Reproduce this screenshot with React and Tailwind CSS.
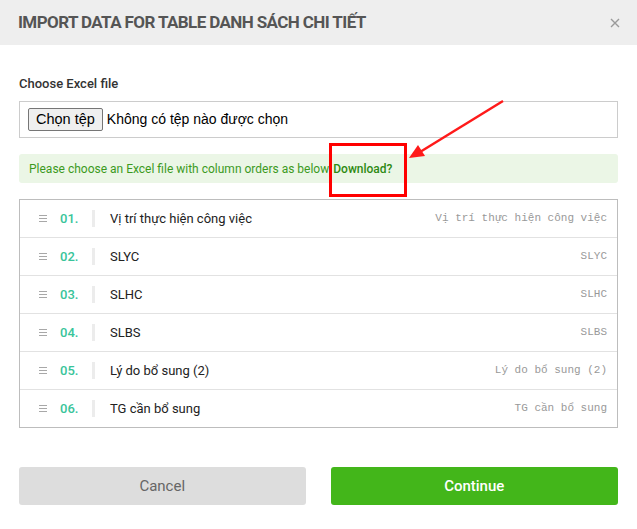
import React from "react";

const rows = [
  ["01.", "Vị trí thực hiện công việc"],
  ["02.", "SLYC"],
  ["03.", "SLHC"],
  ["04.", "SLBS"],
  ["05.", "Lý do bổ sung (2)"],
  ["06.", "TG cần bổ sung"],
];

export default function App() {
  return (
    <div className="relative w-[637px] h-[529px] bg-white overflow-hidden" style={{ fontFamily: "Roboto, 'Liberation Sans', sans-serif" }}>
      <div className="h-[45px] bg-[#eeeeee] flex items-center justify-between pl-[18px] pr-[16px]">
        <div className="text-[17px] font-bold text-[#555555] tracking-[-0.6px]">IMPORT DATA FOR TABLE DANH SÁCH CHI TIẾT</div>
        <svg width="10" height="10" viewBox="0 0 10 10" className="mr-[1px]">
          <path d="M1 1L9 9M9 1L1 9" stroke="#9a9a9a" strokeWidth="1.4" />
        </svg>
      </div>
      <div className="px-[19px] pt-[31px]">
        <div className="text-[13px] font-medium text-[#333] leading-[16px]">Choose Excel file</div>
        <div className="mt-[9px] h-[37px] border border-[#cccccc] flex items-center px-[8px] gap-[4px]" style={{ fontFamily: "'Liberation Sans', Arial, sans-serif" }}>
          <span className="h-[23px] px-[7px] bg-[#efefef] border border-[#767676] rounded-[2px] flex items-center text-[14.5px] text-black">Chọn tệp</span>
          <span className="text-[14px] text-black">Không có tệp nào được chọn</span>
        </div>
        <div className="mt-[16px] h-[29px] bg-[#ebf6e6] rounded-[3px] flex items-center px-[10px] text-[12px] text-[#3c9a1e]">
          <span>Please choose an Excel file with column orders as below</span>
          <span className="ml-[4px] font-medium text-[#2e8a12]">Download?</span>
        </div>
        <div className="mt-[16px] border border-[#bdbdbd]">
          {rows.map(([n, t], i) => (
            <div key={n} className={"flex items-center " + (i > 0 ? "h-[38px] border-t border-[#e2e2e2]" : "h-[37px]")}>
              <span className="ml-[19px] w-[8px] flex flex-col gap-[2px]">
                <span className="h-[1px] bg-[#a8a8a8]" />
                <span className="h-[1px] bg-[#a8a8a8]" />
                <span className="h-[1px] bg-[#a8a8a8]" />
              </span>
              <span className="ml-[13px] w-[30px] text-[13px] text-[#39c49a] font-medium">{n}</span>
              <span className="ml-[2px] w-[3px] h-[17px] bg-[#ececec]" />
              <span className="ml-[15px] text-[13px] text-[#222]">{t}</span>
              <span className="ml-auto mr-[10px] text-[11px] text-[#999999]" style={{ fontFamily: "'Liberation Mono', monospace" }}>{t}</span>
            </div>
          ))}
        </div>
        <div className="mt-[39px] flex gap-[25px]">
          <button className="w-[287px] h-[38px] bg-[#dddddd] rounded-[3px] text-[15px] text-[#666]">Cancel</button>
          <button className="w-[288px] h-[38px] bg-[#43b61a] rounded-[3px] text-[15px] text-white font-medium">Continue</button>
        </div>
      </div>
      <div className="absolute left-[329px] top-[143px] w-[78px] h-[54px] border-[3px] border-[#ff0000]" />
      <svg className="absolute left-0 top-0" width="637" height="529">
        <line x1="503" y1="101" x2="420" y2="152" stroke="#ff1a1a" strokeWidth="2.5" />
        <polygon points="409,158 418,145 425,156" fill="#ff1a1a" />
      </svg>
    </div>
  );
}
